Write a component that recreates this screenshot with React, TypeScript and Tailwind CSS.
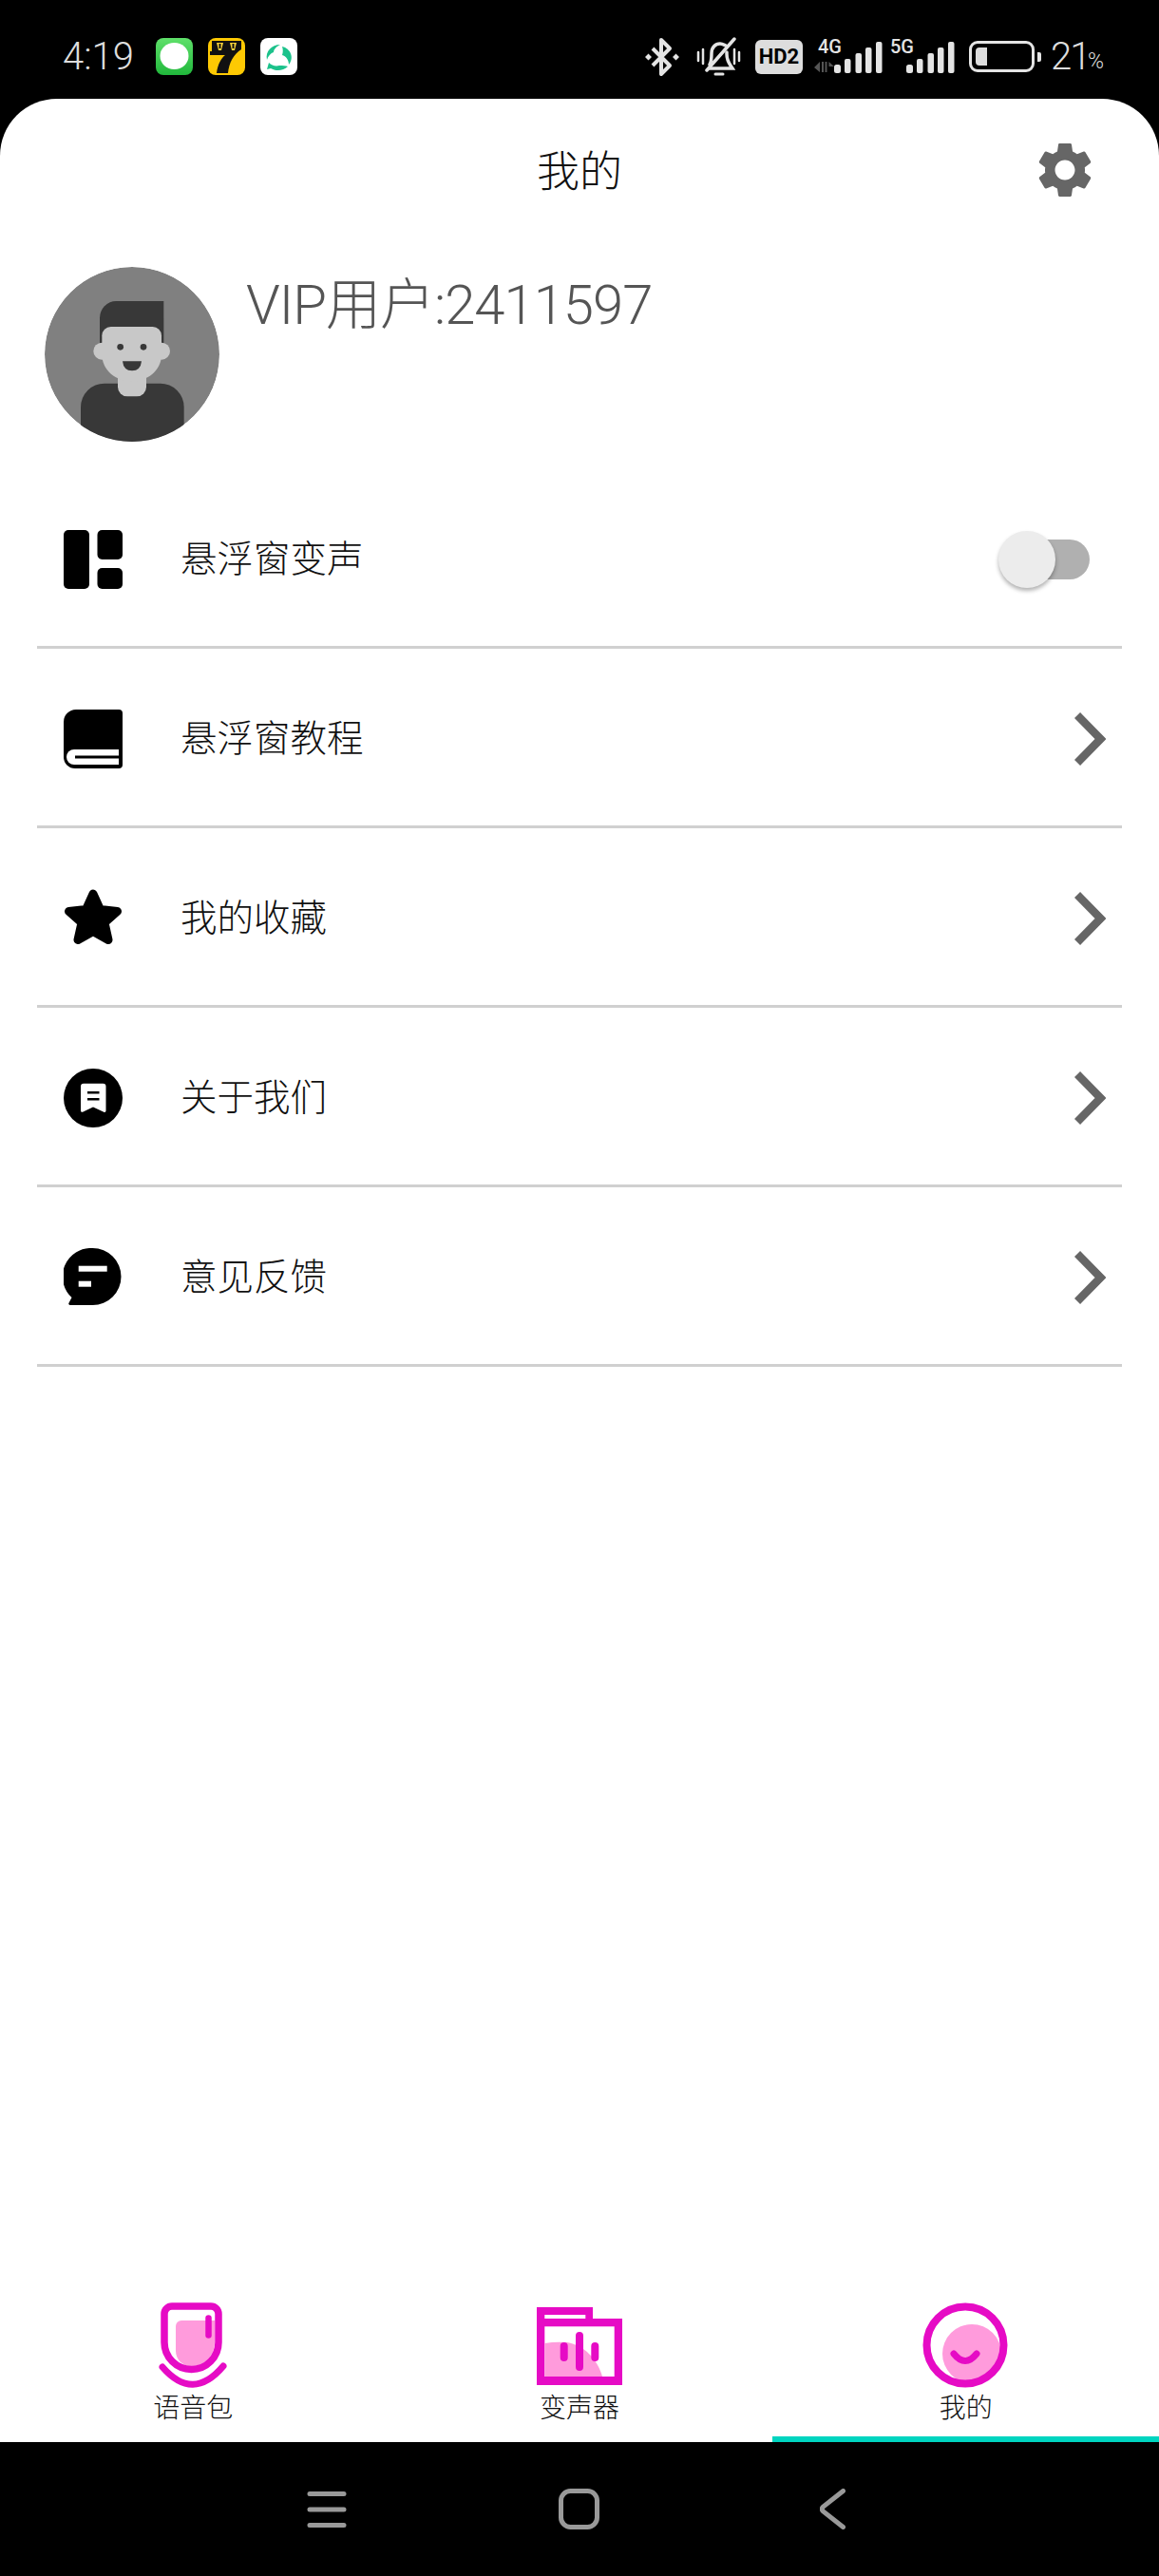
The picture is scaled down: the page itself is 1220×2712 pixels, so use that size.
import React from 'react';

const Chevron = () => (
  <svg width="33" height="56" viewBox="0 0 33 56" fill="none" className="shrink-0">
    <path d="M3 3L27.5 28L3 53" stroke="#666666" strokeWidth="8.5" />
  </svg>
);

const Signal = ({ label, dim }: { label: string; dim?: boolean }) => (
  <div className="relative w-[68px] h-[35px]">
    <span className="absolute left-0 top-[-3px] text-[20px] leading-[20px] font-medium text-[#e4e4e4]">{label}</span>
    <svg width="72" height="35" viewBox="0 0 72 35" className="absolute left-[-4px] top-0" fill="#e4e4e4">
      <rect x="21" y="26" width="7" height="9" rx="2.5" />
      <rect x="32" y="20" width="6.5" height="15" rx="2" />
      <rect x="43.5" y="14" width="6.5" height="21" rx="2" />
      <rect x="54" y="8" width="6.5" height="27" rx="2" />
      <rect x="65" y="2" width="6.5" height="33" rx="2" />
      {dim && <path d="M6 23V34L0 29ZM8 23H10V34H8ZM11.5 23H13.5V34H11.5ZM15.5 23L21 28L15.5 28Z" fill="#555555" />}
    </svg>
  </div>
);

const StatusBar = () => (
  <div className="h-[104px] shrink-0 pt-[15px] pl-[66px] pr-[58px] flex items-center justify-between text-[#dddddd]">
    <div className="flex items-center">
      <span className="w-[78px] text-[40px] leading-none font-light mr-[20px] whitespace-nowrap">4:19</span>
      <div className="flex items-center gap-[16px]">
        <svg width="39" height="39" viewBox="0 0 39 39">
          <defs>
            <linearGradient id="msg" x1="0" y1="0" x2="0" y2="1">
              <stop offset="0" stopColor="#5fe06a" />
              <stop offset="1" stopColor="#21b83c" />
            </linearGradient>
          </defs>
          <rect width="39" height="39" rx="8" fill="url(#msg)" />
          <ellipse cx="19.5" cy="19" rx="15" ry="14" fill="#ffffff" />
        </svg>
        <svg width="39" height="39" viewBox="0 0 39 39">
          <rect width="39" height="39" rx="8" fill="#fdc903" />
          <path d="M4 3H35V12C27 17 22 26 21 37H9C10 28 14 21 18 18H2V14H4Z" fill="#111111" />
          <path d="M9 5H16L14 13H11ZM23 5H30L28 13H25Z" fill="#f7d23a" />
          <path d="M12.5 6V11M26.5 6V11" stroke="#111111" strokeWidth="2" />
        </svg>
        <svg width="39" height="39" viewBox="0 0 39 39">
          <rect width="39" height="39" rx="8" fill="#ffffff" />
          <path d="M7 23C5 14 12 7 21 7C17 9 14 12 14 15C11 16 8 19 7 23Z" fill="#1cc28b" />
          <path d="M23 9C32 11 36 21 30 28C30 23 27 19 23 18C24 15 24 12 23 9Z" fill="#1cc28b" />
          <path d="M29 30C24 35 16 35 11 32L7 33L9 26C12 29 16 30 20 29C24 29 27 29 29 30Z" fill="#1cc28b" />
        </svg>
      </div>
    </div>
    <div className="flex items-center">
      <svg width="38" height="42" viewBox="0 0 38 42" fill="none" stroke="#e4e4e4" strokeWidth="4" strokeLinejoin="round" className="mr-[17px]">
        <path d="M9 12L27 30L18 39V3L27 12L9 30" />
        <path d="M1 21L4.5 17.5L8 21L4.5 24.5ZM30 21L33.5 17.5L37 21L33.5 24.5Z" fill="#e4e4e4" stroke="none" />
      </svg>
      <svg width="47" height="42" viewBox="0 0 47 42" fill="none" stroke="#e4e4e4" strokeWidth="3.5" strokeLinecap="round" className="mr-[15px]">
        <path d="M14 29C16 26 16 23 16 17C16 11 20 7 25 7C27 7 29 8 31 9M32 16V18C32 24 34 27 36 30L38 33H14" />
        <path d="M40 2L11 35" />
        <path d="M20 39H28" strokeWidth="3" />
        <path d="M2 16V25M7 13V28M40 13V28M45 16V25" strokeWidth="2.5" />
      </svg>
      <span className="w-[50px] h-[36px] rounded-[6px] bg-[#dddddd] text-black text-[22px] leading-[36px] font-bold text-center mr-[16px]">HD2</span>
      <Signal label="4G" dim />
      <div className="w-[8px]" />
      <Signal label="5G" />
      <div className="w-[15px]" />
      <div className="w-[69px] h-[33px] rounded-[9px] border-[3px] border-[#e4e4e4] p-[4px] mr-[3px]">
        <div className="w-[12px] h-full rounded-l-[4px] bg-[#dddddd]" />
      </div>
      <div className="w-[4px] h-[10px] rounded-r-[2px] bg-[#e4e4e4] mr-[10px]" />
      <span className="w-[39px] text-[40px] leading-none font-light tracking-[-2px] whitespace-nowrap">21</span>
      <span className="text-[23px] leading-none font-light mt-[10px] whitespace-nowrap">%</span>
    </div>
  </div>
);

const Avatar = () => (
  <svg width="184" height="184" viewBox="0 0 552 552" className="shrink-0 rounded-full">
    <circle cx="276" cy="276" r="276" fill="#808080" />
    <path d="M174 240V161a52 53 0 0 1 52-53H376V240Z" fill="#383838" />
    <rect x="114" y="368" width="326" height="300" rx="75" fill="#383838" />
    <rect x="231" y="320" width="90" height="89" rx="30" fill="#c8c8c8" />
    <circle cx="181" cy="266" r="27" fill="#c8c8c8" />
    <circle cx="369" cy="266" r="27" fill="#c8c8c8" />
    <path d="M181 217a28 28 0 0 1 28-28h132a28 28 0 0 1 28 28v60c0 50-45 85-94 85s-94-35-94-85z" fill="#c8c8c8" />
    <circle cx="239" cy="253" r="10" fill="#383838" />
    <circle cx="312" cy="253" r="10" fill="#383838" />
    <path d="M246 298H306Q303 328 276 328Q249 328 246 298Z" fill="#383838" />
  </svg>
);

const PanelIcon = () => (
  <svg width="62" height="62" viewBox="0 0 62 62" fill="#000000">
    <rect width="27" height="62" rx="5" />
    <rect x="35.5" width="26.5" height="31" rx="5" />
    <rect x="35.5" y="40" width="26.5" height="22" rx="5" />
  </svg>
);

const BookIcon = () => (
  <svg width="62" height="62" viewBox="0 0 62 62">
    <path d="M13 0H58a4 4 0 0 1 4 4V58a4 4 0 0 1-4 4H12A12 12 0 0 1 0 50V13A13 13 0 0 1 13 0Z" fill="#000000" />
    <path d="M58 42H11a8 8 0 0 0 0 16H58Z" fill="#ffffff" />
    <path d="M12 50H58" stroke="#000000" strokeWidth="3" />
  </svg>
);

const StarIcon = () => (
  <svg width="62" height="62" viewBox="0 0 62 62" fill="#000000">
    <path d="M31 5L38.5 21.5L56.5 23.5L43 35.5L47 53.5L31 44.5L15 53.5L19 35.5L5.5 23.5L23.5 21.5Z" stroke="#000000" strokeWidth="9" strokeLinejoin="round" />
  </svg>
);

const AboutIcon = () => (
  <svg width="62" height="62" viewBox="0 0 62 62">
    <circle cx="31" cy="31" r="31" fill="#000000" />
    <path d="M21 15.7H41.5a3 3 0 0 1 3 3V44.5a1.5 1.5 0 0 1-2.2 1.2L31 40.5L20 45.7a1.5 1.5 0 0 1-2-1.2V18.7a3 3 0 0 1 3-3Z" fill="#ffffff" />
    <rect x="25" y="24" width="12.5" height="2.5" fill="#000000" />
    <rect x="25" y="31" width="12.5" height="2.5" fill="#000000" />
  </svg>
);

const FeedbackIcon = () => (
  <svg width="62" height="62" viewBox="0 0 62 62">
    <path d="M30.5 0A30 30 0 1 1 30.5 60H7a1.5 1.5 0 0 1-1.5-2.3L8.5 52A30 30 0 0 1 30.5 0Z" fill="#000000" />
    <rect x="15.7" y="18.7" width="30" height="6" fill="#ffffff" />
    <rect x="15.7" y="34.7" width="13.3" height="6" fill="#ffffff" />
  </svg>
);

const Toggle = () => (
  <div className="relative w-[96px] h-[60px] mr-[17px] flex items-center justify-end">
    <div className="w-[85px] h-[42px] rounded-full bg-[#b0b0b0]" />
    <div className="absolute left-0 top-0 w-[60px] h-[60px] rounded-full bg-[#ececec] shadow-[0_3px_4px_rgba(0,0,0,0.3)]" />
  </div>
);

const rows = [
  { label: '悬浮窗变声', icon: <PanelIcon />, toggle: true },
  { label: '悬浮窗教程', icon: <BookIcon /> },
  { label: '我的收藏', icon: <StarIcon /> },
  { label: '关于我们', icon: <AboutIcon /> },
  { label: '意见反馈', icon: <FeedbackIcon /> },
];

const VoiceTab = () => (
  <svg width="90" height="90" viewBox="0 0 90 90" fill="none">
    <path d="M27 25a6 6 0 0 1 6-6h35v23c0 14-11 25-25 25-9 0-16-7-16-16z" fill="#ff9bdc" />
    <path d="M15 12a8 8 0 0 1 8-8h41a8 8 0 0 1 8 8v30a28.5 28.5 0 0 1-57 0z" stroke="#e60bc5" strokeWidth="7.5" />
    <path d="M61.5 16.5V34.5" stroke="#e60bc5" strokeWidth="6.5" strokeLinecap="round" />
    <path d="M13 68Q45 105 77 67" stroke="#e60bc5" strokeWidth="7" strokeLinecap="round" />
  </svg>
);

const ChangerTab = () => (
  <svg width="90" height="90" viewBox="0 0 90 90" fill="none">
    <g transform="translate(0 5)">
      <path d="M0 0H59V12H90V82H0Z" fill="#e60bc5" />
      <rect x="8.3" y="8" width="43" height="4" fill="#ffffff" />
      <rect x="8.3" y="20.3" width="73.4" height="52.7" fill="#ffffff" />
      <path d="M8.3 38Q20 36 32 37C50 40 64 55 69 73H8.3Z" fill="#ff9bdc" />
      <path d="M28.7 41V53M45 30V63M61.3 41V53" stroke="#e60bc5" strokeWidth="8" strokeLinecap="round" />
    </g>
  </svg>
);

const MineTab = () => (
  <svg width="90" height="90" viewBox="0 0 90 90" fill="none" className="ml-[-2px]">
    <circle cx="52" cy="54" r="31" fill="#ff9bdc" />
    <circle cx="45" cy="45" r="40.5" stroke="#e60bc5" strokeWidth="8" />
    <path d="M33 54Q45 69 57 54" stroke="#e60bc5" strokeWidth="7" strokeLinecap="round" />
  </svg>
);

const tabs = [
  { label: '语音包', icon: <VoiceTab /> },
  { label: '变声器', icon: <ChangerTab /> },
  { label: '我的', icon: <MineTab />, active: true },
];

export default function App() {
  return (
    <div className="w-[1220px] h-[2712px] bg-black flex flex-col font-['Roboto','Noto_Sans_CJK_SC',sans-serif]">
      <StatusBar />

      <div className="flex-1 bg-white rounded-t-[60px] flex flex-col overflow-hidden">
        {/* title bar */}
        <div className="h-[154px] shrink-0 grid grid-cols-[1fr_auto_1fr] items-center">
          <div />
          <h1 className="text-[45px] font-light text-[#111111] mt-[2px]">我的</h1>
          <svg width="70" height="70" viewBox="0 0 24 24" fill="#666666" className="justify-self-end mr-[64px] mt-[-4px]">
            <path d="M19.14 12.94c.04-.3.06-.61.06-.94 0-.32-.02-.64-.07-.94l2.03-1.58a.49.49 0 0 0 .12-.61l-1.92-3.32a.488.488 0 0 0-.59-.22l-2.39.96c-.5-.38-1.03-.7-1.62-.94l-.36-2.54a.484.484 0 0 0-.48-.41h-3.84c-.24 0-.43.17-.47.41l-.36 2.54c-.59.24-1.13.57-1.62.94l-2.39-.96c-.22-.08-.47 0-.59.22L2.74 8.87c-.12.21-.08.47.12.61l2.03 1.58c-.05.3-.09.63-.09.94s.02.64.07.94l-2.03 1.58a.49.49 0 0 0-.12.61l1.92 3.32c.12.22.37.29.59.22l2.39-.96c.5.38 1.03.7 1.62.94l.36 2.54c.05.24.24.41.48.41h3.84c.24 0 .44-.17.47-.41l.36-2.54c.59-.24 1.13-.56 1.62-.94l2.39.96c.22.08.47 0 .59-.22l1.92-3.32c.12-.22.07-.47-.12-.61l-2.01-1.58zM12 15.6c-1.98 0-3.6-1.62-3.6-3.6s1.62-3.6 3.6-3.6 3.6 1.62 3.6 3.6-1.62 3.6-3.6 3.6z" />
          </svg>
        </div>

        {/* profile */}
        <div className="shrink-0 pt-[23px] pl-[47px] pb-[29px] flex items-start gap-[28px]">
          <Avatar />
          <span className="text-[58px] leading-[80px] font-light tracking-[-1px] text-[#555555] whitespace-nowrap">VIP用户:2411597</span>
        </div>

        {/* menu */}
        <div className="shrink-0 mx-[39px]">
          {rows.map((row) => (
            <div key={row.label} className="h-[189px] border-b-[3px] border-[#d0d0d0] pt-[3px] pl-[28px] pr-[17px] flex items-center">
              {row.icon}
              <span className="ml-[61px] flex-1 text-[38.5px] font-light text-[#111111]">{row.label}</span>
              {row.toggle ? <Toggle /> : <Chevron />}
            </div>
          ))}
        </div>

        <div className="flex-1" />

        {/* tabs */}
        <div className="h-[147px] shrink-0 grid grid-cols-3">
          {tabs.map((tab) => (
            <div key={tab.label} className={`flex flex-col items-center border-b-[6px] ${tab.active ? 'border-[#00d5c0]' : 'border-transparent'}`}>
              {tab.icon}
              <span className="text-[28px] leading-[44px] font-light text-[#111111]">{tab.label}</span>
            </div>
          ))}
        </div>
      </div>

      {/* system nav */}
      <div className="h-[141px] shrink-0 flex items-center pl-[323px]">
        <svg width="42" height="38" viewBox="0 0 42 38" stroke="#999999" strokeWidth="5" strokeLinecap="round">
          <path d="M3 2.5H39M3 19H39M3 35.5H39" />
        </svg>
        <svg width="43" height="43" viewBox="0 0 43 43" fill="none" className="ml-[223px]">
          <rect x="2.5" y="2.5" width="38" height="38" rx="10" stroke="#999999" strokeWidth="5" />
        </svg>
        <svg width="27" height="43" viewBox="0 0 27 43" fill="none" className="ml-[232px]">
          <path d="M24.5 2.5L3.5 19Q1 21.5 3.5 24L24.5 40.5" stroke="#999999" strokeWidth="5" strokeLinecap="round" />
        </svg>
      </div>
    </div>
  );
}
